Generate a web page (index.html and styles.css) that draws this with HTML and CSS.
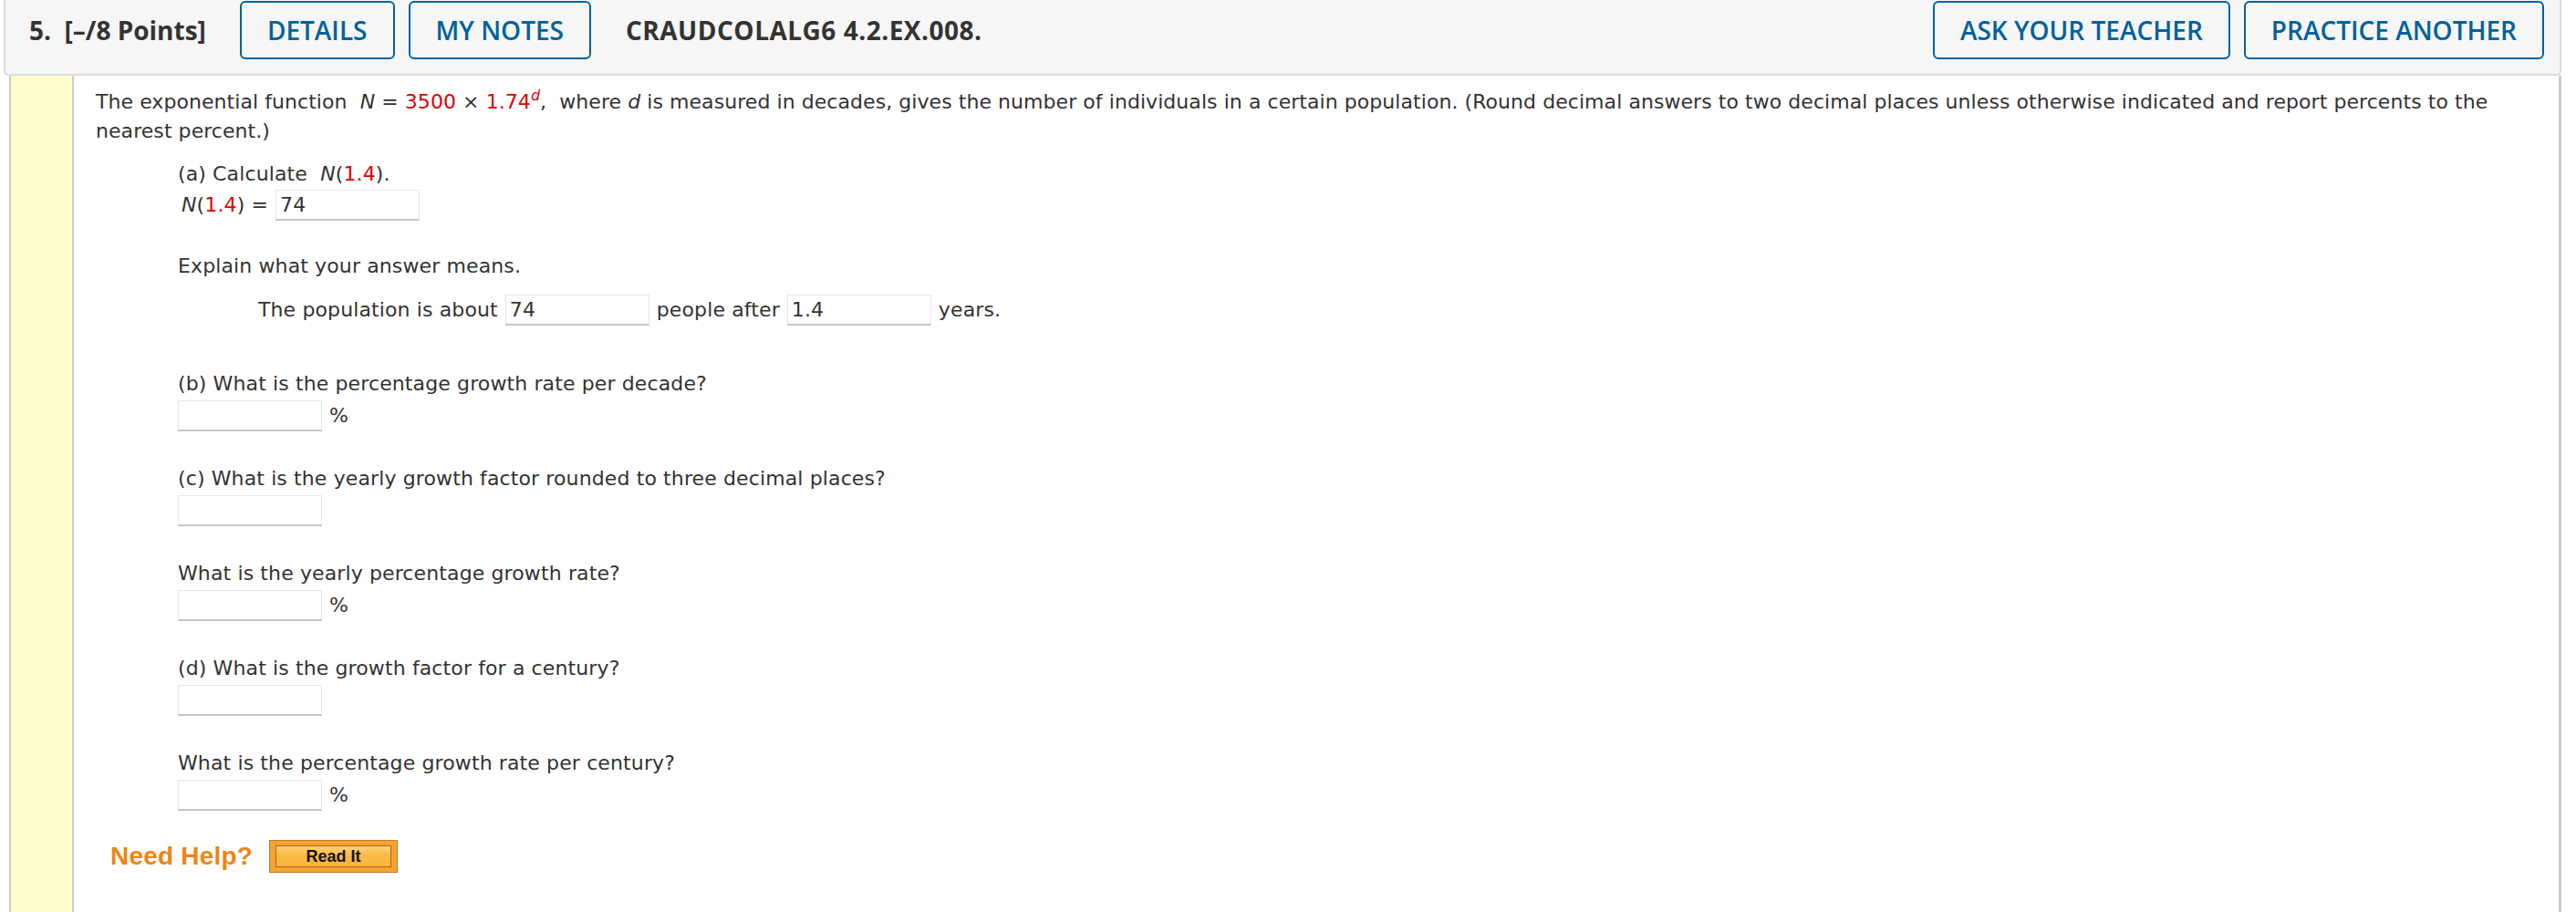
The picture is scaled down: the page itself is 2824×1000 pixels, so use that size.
FILE: index.html
```html
<!DOCTYPE html>
<html lang="en">
<head>
<meta charset="utf-8">
<title>CRAUDCOLALG6 4.2.EX.008</title>
<link rel="stylesheet" href="styles.css">
</head>
<body>
<div class="page">
  <header class="qhead">
    <span class="qnum">5.&nbsp; [–/8 Points]</span>
    <a class="btn" href="#">DETAILS</a>
    <a class="btn" href="#">MY NOTES</a>
    <span class="qcode">CRAUDCOLALG6 4.2.EX.008.</span>
    <span class="spacer"></span>
    <a class="btn" href="#">ASK YOUR TEACHER</a>
    <a class="btn" href="#">PRACTICE ANOTHER</a>
  </header>
  <div class="qbox">
    <div class="side"></div>
    <div class="qbody">
      <p class="intro">The exponential function&nbsp; <i>N</i> = <span class="red">3500</span> × <span class="red">1.74<sup><i>d</i></sup></span>,&nbsp; where <i>d</i> is measured in decades, gives the number of individuals in a certain population. (Round decimal answers to two decimal places unless otherwise indicated and report percents to the<br>nearest percent.)</p>

      <div class="part">
        <div class="qline">(a) Calculate&nbsp; <i>N</i>(<span class="red">1.4</span>).</div>
        <div class="ansrow eqrow"><span><i>N</i>(<span class="red">1.4</span>) =</span><span class="inp">74</span></div>

        <div class="qline explain">Explain what your answer means.</div>
        <div class="ansrow poprow"><span>The population is about</span><span class="inp">74</span><span>people after</span><span class="inp">1.4</span><span>years.</span></div>

        <div class="q first">
          <div class="qline">(b) What is the percentage growth rate per decade?</div>
          <div class="ansrow"><span class="inp"></span><span>%</span></div>
        </div>
        <div class="q">
          <div class="qline">(c) What is the yearly growth factor rounded to three decimal places?</div>
          <div class="ansrow"><span class="inp"></span></div>
        </div>
        <div class="q">
          <div class="qline">What is the yearly percentage growth rate?</div>
          <div class="ansrow"><span class="inp"></span><span>%</span></div>
        </div>
        <div class="q">
          <div class="qline">(d) What is the growth factor for a century?</div>
          <div class="ansrow"><span class="inp"></span></div>
        </div>
        <div class="q">
          <div class="qline">What is the percentage growth rate per century?</div>
          <div class="ansrow"><span class="inp"></span><span>%</span></div>
        </div>
      </div>

      <div class="help">
        <span class="needhelp">Need Help?</span>
        <a class="readit" href="#"><span>Read It</span></a>
      </div>
    </div>
  </div>
</div>
</body>
</html>
```

FILE: styles.css
```css
* { box-sizing: border-box; }
html, body { margin: 0; padding: 0; background: #fff; }
body {
  width: 2824px;
  font-family: "DejaVu Sans", Verdana, sans-serif;
  font-size: 22px;
  line-height: 32px;
  letter-spacing: 0.12px;
  color: #333;
}
.page { margin: 0 16px 0 4px; }

/* header bar */
.qhead {
  display: flex;
  align-items: center;
  background: #f6f6f6;
  border: 2px solid #ddd;
  border-top: 0;
  border-radius: 0 0 5px 5px;
  padding: 1px 17px 16px 26px;
  font-family: "Open Sans", "DejaVu Sans", sans-serif;
  font-size: 28px;
  letter-spacing: 0;
}
.qnum { font-weight: 700; color: #333; margin-right: 37px; white-space: pre; }
.btn {
  display: flex;
  align-items: center;
  height: 64px;
  padding: 0 28px;
  border: 2px solid #00629b;
  border-radius: 6px;
  color: #00629b;
  font-weight: 600;
  text-decoration: none;
  white-space: nowrap;
}
.btn + .btn { margin-left: 15px; }
.qcode { margin-left: 38px; font-weight: 700; color: #333; letter-spacing: 0.5px; }
.spacer { flex: 1; }

/* question box */
.qbox {
  display: flex;
  margin-left: 6px;
  border-left: 2px solid #ccc;
  border-right: 3px solid #ccc;
  min-height: 920px;
}
.side {
  flex: none;
  width: 69px;
  background: #ffffcc;
  border-right: 2px solid #ccc;
}
.qbody { flex: 1; padding: 13px 0 0 24px; }

.intro { margin: 0 0 15px; letter-spacing: 0.06px; }
.red { color: #e00000; }
sup { font-size: 16px; line-height: 0; vertical-align: 9px; }

.part { margin-left: 90px; }
.qline { height: 32px; white-space: nowrap; }
.ansrow {
  display: flex;
  align-items: center;
  gap: 8px;
  height: 34px;
}
.eqrow { margin-top: 1px; padding-left: 4px; }
.explain { margin-top: 34px; }
.poprow { margin: 15px 0 0 88px; }

.inp {
  display: block;
  width: 158px;
  height: 34px;
  padding: 0 4px;
  background: #fff;
  border: 1px solid #e6e6e6;
  border-bottom: 2px solid #c6c6c6;
  line-height: 31px;
  color: #333;
}

.q { margin-top: 36px; }
.q.first { margin-top: 48px; }
.q .ansrow { margin-top: 2px; }

/* help */
.help {
  display: flex;
  align-items: center;
  margin: 32px 0 0 16px;
  height: 36px;
  letter-spacing: 0;
}
.needhelp {
  font-family: "Liberation Sans", Arial, sans-serif;
  font-weight: 700;
  font-size: 28px;
  letter-spacing: 0.2px;
  color: #ee8516;
}
.readit {
  display: block;
  margin-left: 18px;
  width: 141px;
  height: 36px;
  padding: 5px 6px;
  background: #f7a231;
  border: 1px solid #c77a22;
  text-decoration: none;
}
.readit span {
  display: flex;
  align-items: center;
  justify-content: center;
  height: 100%;
  border: 1px solid #a8671c;
  background: linear-gradient(#fdd27c, #fbbb44 45%, #f9b33d);
  font-family: "Liberation Sans", Arial, sans-serif;
  font-weight: 700;
  font-size: 18px;
  line-height: 1;
  color: #111;
}
```
